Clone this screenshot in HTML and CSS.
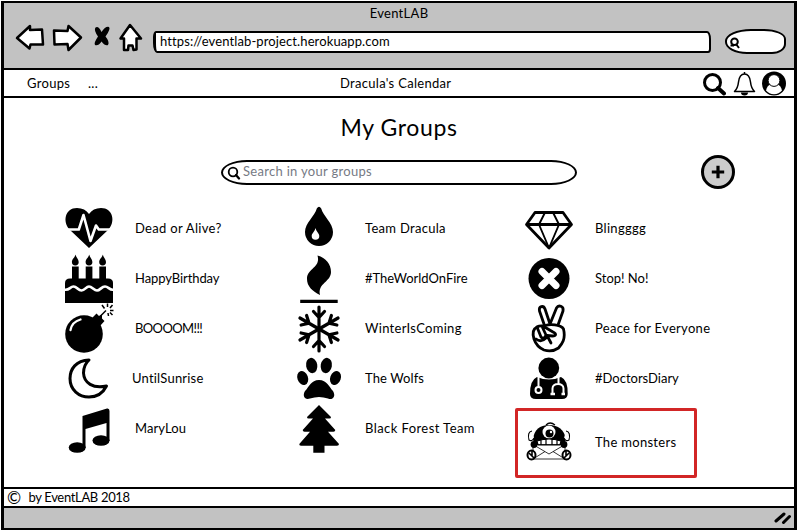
FILE: index.html
```html
<!DOCTYPE html>
<html lang="en">
<head>
<meta charset="utf-8">
<title>EventLAB</title>
<link rel="stylesheet" href="styles.css">
</head>
<body>
<div class="window">
  <header class="chrome">
    <div class="title">EventLAB</div>
    <div class="toolbar">
      <svg class="arrows" width="130" height="32" viewBox="0 0 130 32">
        <g fill="#fff" stroke="#000" stroke-width="2.500" stroke-linejoin="round">
          <path d="M2 15 L15 3 V7 L27 6.500 L28 21.500 H15.500 L14.500 25.500 Z"/>
          <path d="M39 7.500 L52.500 8 L53.500 3 L66 14.500 L53.500 27 L52.500 21 L39.500 21.500 Z"/>
          <path d="M115 2 L105.500 15.500 H109 V27 H113 L113.500 22.500 H117.500 L118.500 27 L121.500 26.500 V15.500 H126 Z"/>
        </g>
        <path d="M80.500 4.500 Q83.500 2.500 86.500 9 Q90.500 3 94 4 Q96 6 90.500 13.500 Q95 19 93 22 Q90.500 23.500 86.500 18.500 Q83 23.500 80 22 Q78.500 20 83 13.500 Q78.500 7 80.500 4.500 Z"/>
      </svg>
      <div class="url">https://eventlab-project.herokuapp.com</div>
      <div class="minisearch">
        <svg width="12" height="12" viewBox="0 0 12 12" fill="none" stroke="#000" stroke-width="2"><circle cx="5.500" cy="4.800" r="3.300"/><path d="M1.500 8.500 H5 M7 7 L10 11"/></svg>
      </div>
    </div>
  </header>
  <nav class="nav">
    <span class="link">Groups</span><span class="dots">...</span>
    <span class="heading">Dracula's Calendar</span>
    <span class="tools">
      <svg width="24" height="26" viewBox="0 0 24 26" fill="none" stroke="#000"><circle cx="10.500" cy="12.500" r="8" stroke-width="3"/><path d="M16 18 L22 23.500" stroke-width="4" stroke-linecap="round"/></svg>
      <svg width="24" height="26" viewBox="0 0 24 26"><path d="M12.500 2 V4 M12.500 4 C8 4 7 8 6.500 12 C6 17 5 19 2.500 21.500 H22.500 C20 19 19 17 18.500 12 C18 8 17 4 12.500 4 Z" fill="none" stroke="#000" stroke-width="1.500" stroke-linejoin="round"/><path d="M9 22.500 H16 A3.500 3 0 0 1 9 22.500 Z"/></svg>
      <svg width="24" height="26" viewBox="0 0 24 26"><circle cx="12" cy="13.500" r="12"/><path d="M4 20.500 C5 17 6 15.500 8 14.800 H16 C18 15.500 19 17 20 20.500 Q17 24.200 12 24.200 T4 20.500 Z" fill="#fff"/><circle cx="12" cy="10.500" r="5.900" fill="#fff" stroke="#000" stroke-width="1"/></svg>
    </span>
  </nav>
  <main class="main">
    <h1>My Groups</h1>
    <div class="searchrow">
      <div class="search">
        <svg width="14" height="14" viewBox="0 0 14 14" fill="none" stroke="#000"><circle cx="6" cy="6" r="4.300" stroke-width="1.800"/><path d="M9 9 L12 12.500" stroke-width="2.300" stroke-linecap="round"/></svg>
        <span>Search in your groups</span>
      </div>
      <button class="add"><svg width="14" height="14" viewBox="0 0 14 14"><path d="M7 .8 V13.200 M.8 7 H13.200" stroke="#000" stroke-width="3.200"/></svg></button>
    </div>
    <div class="groups">
      <div class="group">
        <svg viewBox="0 0 50 50"><path d="M25 45 L6 27 C-2 19 1 5 13 5 Q21 5 25 11 Q29 5 37 5 C49 5 52 19 44 27 Z"/><path d="M0 26.500 H14.800 L19.500 12 L26.500 38 L32 22.500 L34.800 26.500 H50" fill="none" stroke="#fff" stroke-width="2.600" stroke-linejoin="round"/></svg>
        <span>Dead or Alive?</span>
      </div>
      <div class="group">
        <svg viewBox="0 0 50 50"><path d="M22.800 5.500 Q25 1.800 27.200 5.500 C29 13 39 20 39 29 A14 14 0 0 1 11 29 C11 20 21 13 22.800 5.500 Z"/><path d="M21.500 25 C22 28 25.300 30.500 25.300 33 A3.800 3.800 0 0 1 17.700 33 C17.700 30.500 21 28 21.500 25 Z" fill="#fff"/></svg>
        <span>Team Dracula</span>
      </div>
      <div class="group">
        <svg viewBox="0 0 50 50"><g fill="none" stroke="#000" stroke-linejoin="round"><path d="M11 9.500 H39 L47.500 21.500 L25 45 L2.500 21.500 Z M2.500 21.500 H47.500" stroke-width="2.800"/><path d="M21 9.500 L15 21.500 L25 45 L35 21.500 L29 9.500" stroke-width="1.900"/></g></svg>
        <span>Blingggg</span>
      </div>

      <div class="group">
        <svg viewBox="0 0 50 50"><g id="candle"><path d="M11.500 1.500 C12 4.500 14.700 6 14.700 9 A3.400 3.400 0 0 1 7.900 9 C7.900 6 11 4.500 11.500 1.500 Z M8 13.500 H14.700 V27 H8 Z"/></g><use href="#candle" x="13.700"/><use href="#candle" x="27.300"/><path d="M1 50 V30 Q1 25.500 6 25.500 H44 Q49 25.500 49 30 V50 Z"/><path d="M0 36.500 C5 38 6 33.500 9.500 33.500 S14 37.500 17.500 37.500 S22 33.500 25 33.500 S30 37.500 33 37.500 S37.500 33.500 41 33.500 S46 38 50 36.500" fill="none" stroke="#fff" stroke-width="2.700"/></svg>
        <span class="snug">HappyBirthday</span>
      </div>
      <div class="group">
        <svg viewBox="0 0 50 50"><path d="M23.500 2.500 C32 5 37 11 37 19 C37 29 23.500 30 26 42 C18 38 13 33 13 26 C13 15 27 15 23.500 2.500 Z M6.200 46.700 H43.700 V50 H6.200 Z"/></svg>
        <span class="even">#TheWorldOnFire</span>
      </div>
      <div class="group">
        <svg viewBox="0 0 50 50"><circle cx="25" cy="25.500" r="20.500"/><path d="M18 18.500 L32 32.500 M32 18.500 L18 32.500" stroke="#fff" stroke-width="7" stroke-linecap="round"/></svg>
        <span class="even">Stop! No!</span>
      </div>

      <div class="group">
        <svg viewBox="0 0 50 50"><circle cx="20" cy="31" r="18.800"/><path d="M28 15 L32.500 10.500 L35 13 L38 11.500 L38 15.500 L40.500 18 L36 23 Z"/><path d="M6.500 27 C7.500 21.500 11 18 16.500 16.500" fill="none" stroke="#fff" stroke-width="2.300" stroke-linecap="round"/><path d="M35 14.500 L42 7.500 M43.500 4 V.5 M40.500 5.500 L38 2 M46 5 L48.500 2 M46 7.500 H49.500 M44 10 L44.500 13 M46 9.500 L48.500 12" stroke="#000" stroke-width="1.500"/></svg>
        <span class="tight">BOOOOM!!!</span>
      </div>
      <div class="group">
        <svg viewBox="0 0 50 50"><g fill="none" stroke="#000" stroke-width="3.200" stroke-linecap="round" stroke-linejoin="round"><g id="arm"><path d="M25 26 V4 M19.500 8.500 L25 14.500 L30.500 8.500"/></g><use href="#arm" transform="rotate(60 25 26)"/><use href="#arm" transform="rotate(120 25 26)"/><use href="#arm" transform="rotate(180 25 26)"/><use href="#arm" transform="rotate(240 25 26)"/><use href="#arm" transform="rotate(300 25 26)"/></g></svg>
        <span>WinterIsComing</span>
      </div>
      <div class="group">
        <svg viewBox="0 0 50 50"><g fill="none" stroke="#000" stroke-width="2.800" stroke-linejoin="round" stroke-linecap="round"><path d="M20.500 22.500 L15.500 8 C14.500 3 19.500 2 21 6 L26 21 L32.500 5 C34.500 1.500 40 3 39 8 L34 22"/><path d="M13 24 C17 21.500 20 24 21.500 22.500 C25 21 37 21 39.500 26 C42 36 38 41 34.500 45 Q28 49.500 20 47 C13 44 11 39 10 36 C8.500 31 9 26 13 24 Z"/><path d="M13 24 L17 34 Q20 37 22 32 L18.500 24.500 M20.500 24 L29 29 C33 31 32 33 28.500 33 L23 32.500 M12 36 Q17 40 22 35 M23 32.500 L27 40"/></g></svg>
        <span>Peace for Everyone</span>
      </div>

      <div class="group sunrise">
        <svg viewBox="0 0 50 50"><path d="M25 7 C12 7.500 6 16 6 25.500 C6 37 15 44 25 44 C33 44 39 40 42.500 33 C29 36 20 30 19.500 20 Q19.500 12 25 7 Z" fill="none" stroke="#000" stroke-width="3" stroke-linejoin="round"/></svg>
        <span>UntilSunrise</span>
      </div>
      <div class="group">
        <svg viewBox="0 0 50 50"><ellipse cx="17.700" cy="12.500" rx="5.600" ry="7.700" transform="rotate(-10 17.700 12.500)"/><ellipse cx="32.300" cy="12.500" rx="5.600" ry="7.700" transform="rotate(10 32.300 12.500)"/><ellipse cx="8.700" cy="25" rx="5.300" ry="7.200" transform="rotate(-20 8.700 25)"/><ellipse cx="41.500" cy="25" rx="5.300" ry="7.200" transform="rotate(20 41.500 25)"/><path d="M25 27 C33 27 35 34 39 38 C42.500 44 38 47.500 34 45.500 Q25 42.500 16 45.500 C11 47.500 8 43 11 38 C15 34 17 27 25 27 Z"/></svg>
        <span class="close">The Wolfs</span>
      </div>
      <div class="group">
        <svg viewBox="0 0 50 50"><circle cx="24.800" cy="15" r="10.400"/><path d="M13 24 Q25 29 37 24 Q44 27 43.700 41 Q43.500 46 38 46 H12 Q6 46 6 41 Q6 27 13 24 Z"/><g fill="none" stroke="#fff" stroke-width="2"><path d="M14.500 22 V34 M34.500 22 V31 M28.500 42 V35.500 C28.500 29.500 39.500 29.500 39.500 35.500 V42"/><circle cx="14.500" cy="37" r="3"/></g><path d="M26.500 41 H31 M37.500 41 H41" stroke="#fff" stroke-width="2.500"/></svg>
        <span class="even">#DoctorsDiary</span>
      </div>

      <div class="group">
        <svg viewBox="0 0 50 50"><path d="M18.500 13 L43 5.500 Q45.500 5 45.500 8 V38 H42.500 V20 L21.500 26 V45 H18.500 Z"/><ellipse cx="13.200" cy="44.500" rx="8.500" ry="5.300"/><ellipse cx="37" cy="37.500" rx="8.500" ry="5.300"/></svg>
        <span class="close">MaryLou</span>
      </div>
      <div class="group">
        <svg viewBox="0 0 50 50"><path d="M25 2 L37 14 Q37 15.500 35.500 15.500 H31 L41.300 27 Q41.300 28.700 39.500 28.700 H34 L45 41 Q45 42.700 43 42.700 H30.500 V49.700 H19.300 V42.700 H7 Q5 42.700 5.300 41 L16 28.700 H10.500 Q8.700 28.700 8.700 27 L19 15.500 H14.500 Q13 15.500 13 14 Z"/></svg>
        <span class="wide">Black Forest Team</span>
      </div>
      <div class="group selected">
        <svg viewBox="0 0 50 50"><path d="M9 21 Q11 7 25 7 Q39 7 42 21 L40 27 H10 Z"/><path d="M22 7 Q26 3 31 7" fill="none" stroke="#000" stroke-width="1.200"/><circle cx="25" cy="14" r="6.500" fill="#fff"/><circle cx="25.500" cy="15.500" r="4"/><circle cx="27" cy="14" r="1.200" fill="#fff"/><path d="M13 23 Q25 19 37 23 L36 27 H14 Z M17 22 V27 M22 21 V27 M28 21 V27 M33 22 V27" fill="#fff" stroke="#000" stroke-width="1.200"/><path d="M9 26.500 H41 V41 H9 Z M9 26.500 L25 36 L41 26.500 M9 41 L21 33.500 M41 41 L29 33.500" fill="#fff" stroke="#000" stroke-width=".8"/><path d="M8 13 Q3 14 5 22 Q8 24 10 20 M42 13 Q47 14 45 22 Q42 24 40 20" fill="#fff" stroke="#000" stroke-width="1.100"/><circle cx="10" cy="26.500" r="3.400"/><circle cx="40" cy="26.500" r="3.400"/><g fill="#fff" stroke="#000" stroke-width="2"><ellipse cx="7.500" cy="37" rx="4" ry="4.500"/><ellipse cx="42.500" cy="37" rx="4" ry="4.500"/></g><path d="M5 35 L10 40 M40 40 L45 35 M8 33 V38 M42 33 V38" stroke="#000" stroke-width="1.600"/></svg>
        <span>The monsters</span>
      </div>
    </div>
  </main>
  <footer class="footer"><span class="copy">©</span><span class="by">by EventLAB 2018</span></footer>
  <div class="statusbar">
    <svg width="18" height="14" viewBox="0 0 18 14"><path d="M2 10 L10 3 M9.500 11.500 L15.500 5.500" stroke="#000" stroke-width="3" stroke-linecap="round"/></svg>
  </div>
</div>
</body>
</html>
```
FILE: styles.css
```css
* { box-sizing: border-box; }
body {
  margin: 0;
  background: #fff;
  color: #000;
  font: 13px/18px Lato, "Open Sans", sans-serif;
  letter-spacing: .3px;
}
svg { display: block; flex: none; }
.window {
  width: 798px;
  height: 531px;
  padding: 1px;
  display: flex;
  flex-direction: column;
}
.window > * { border-left: 3px solid #000; border-right: 3px solid #000; }
.chrome {
  height: 69px;
  background: #c2c2c2;
  border-top: 2px solid #000;
  border-bottom: 2px solid #000;
}
.title { text-align: center; height: 20px; line-height: 21px; }
.toolbar { display: flex; padding-left: 11px; }
.arrows { margin-right: 8px; }
.url {
  width: 558px;
  height: 22px;
  margin-top: 8px;
  padding-left: 4px;
  line-height: 17px;
  letter-spacing: .11px;
  background: #fff;
  border: 2px solid #000;
  border-left-width: 3px;
  border-radius: 3px 4px 3px 4px / 6px 8px 4px 10px;
}
.minisearch {
  width: 61px;
  height: 25px;
  margin: 6px 0 0 14px;
  padding: 6px 0 0 2px;
  background: #fff;
  border: 2.5px solid #000;
  border-radius: 26px 22px 14px 22px / 12px 10px 10px 12px;
}
.nav {
  height: 28px;
  display: grid;
  grid-template-columns: 61px 252px 1fr auto;
  align-items: center;
  padding: 0 7px 2px 23px;
  border-bottom: 2px solid #000;
}
.tools { display: flex; gap: 6px; }
.tools svg { margin: 0 1px 0 -1px; }
.main { height: 389px; padding: 15px 0 0 60px; }
h1 {
  width: 670px;
  margin: 0;
  text-align: center;
  font-size: 23px;
  line-height: 28px;
  font-weight: 400;
  letter-spacing: .6px;
}
.searchrow { display: flex; height: 62px; padding: 14px 0 0 157px; }
.search {
  width: 356px;
  height: 25px;
  margin-top: 5px;
  padding-left: 4px;
  display: flex;
  gap: 2px;
  align-items: center;
  border: 2px solid #000;
  border-radius: 26px / 12.5px;
  color: #767a84;
}
.search span { margin-top: -3px; }
.add {
  width: 34px;
  height: 34px;
  margin: 0 0 0 124px;
  padding: 0;
  display: grid;
  place-items: center;
  background: #ccc;
  border: 3px solid #000;
  border-radius: 50%;
}
.groups {
  display: grid;
  grid-template-columns: repeat(3, 230px);
  grid-auto-rows: 50px;
}
.group { display: flex; align-items: center; gap: 21px; white-space: nowrap; }
.group svg { width: 50px; height: 50px; overflow: visible; }
.tight { letter-spacing: -.6px; }
.snug { letter-spacing: -.08px; }
.even { letter-spacing: 0; }
.close { letter-spacing: .1px; }
.wide { letter-spacing: .42px; }
.sunrise { gap: 18px; }
.sunrise span { letter-spacing: .2px; }
.selected {
  width: 182px;
  height: 70px;
  margin: 5px 0 0 -9px;
  padding-left: 6px;
  border: 3px solid #d22626;
  border-radius: 2px;
}
.selected span { margin-top: -2px; }
.footer {
  height: 21px;
  display: flex;
  gap: 7px;
  align-items: center;
  padding-left: 3px;
  border-top: 2px solid #000;
  border-bottom: 2px solid #000;
}
.copy { font-size: 17px; }
.by { margin-top: -2px; letter-spacing: -.33px; }
.statusbar {
  height: 22px;
  display: flex;
  justify-content: flex-end;
  align-items: center;
  padding-right: 2px;
  background: #c2c2c2;
  border-bottom: 2px solid #000;
}
```
